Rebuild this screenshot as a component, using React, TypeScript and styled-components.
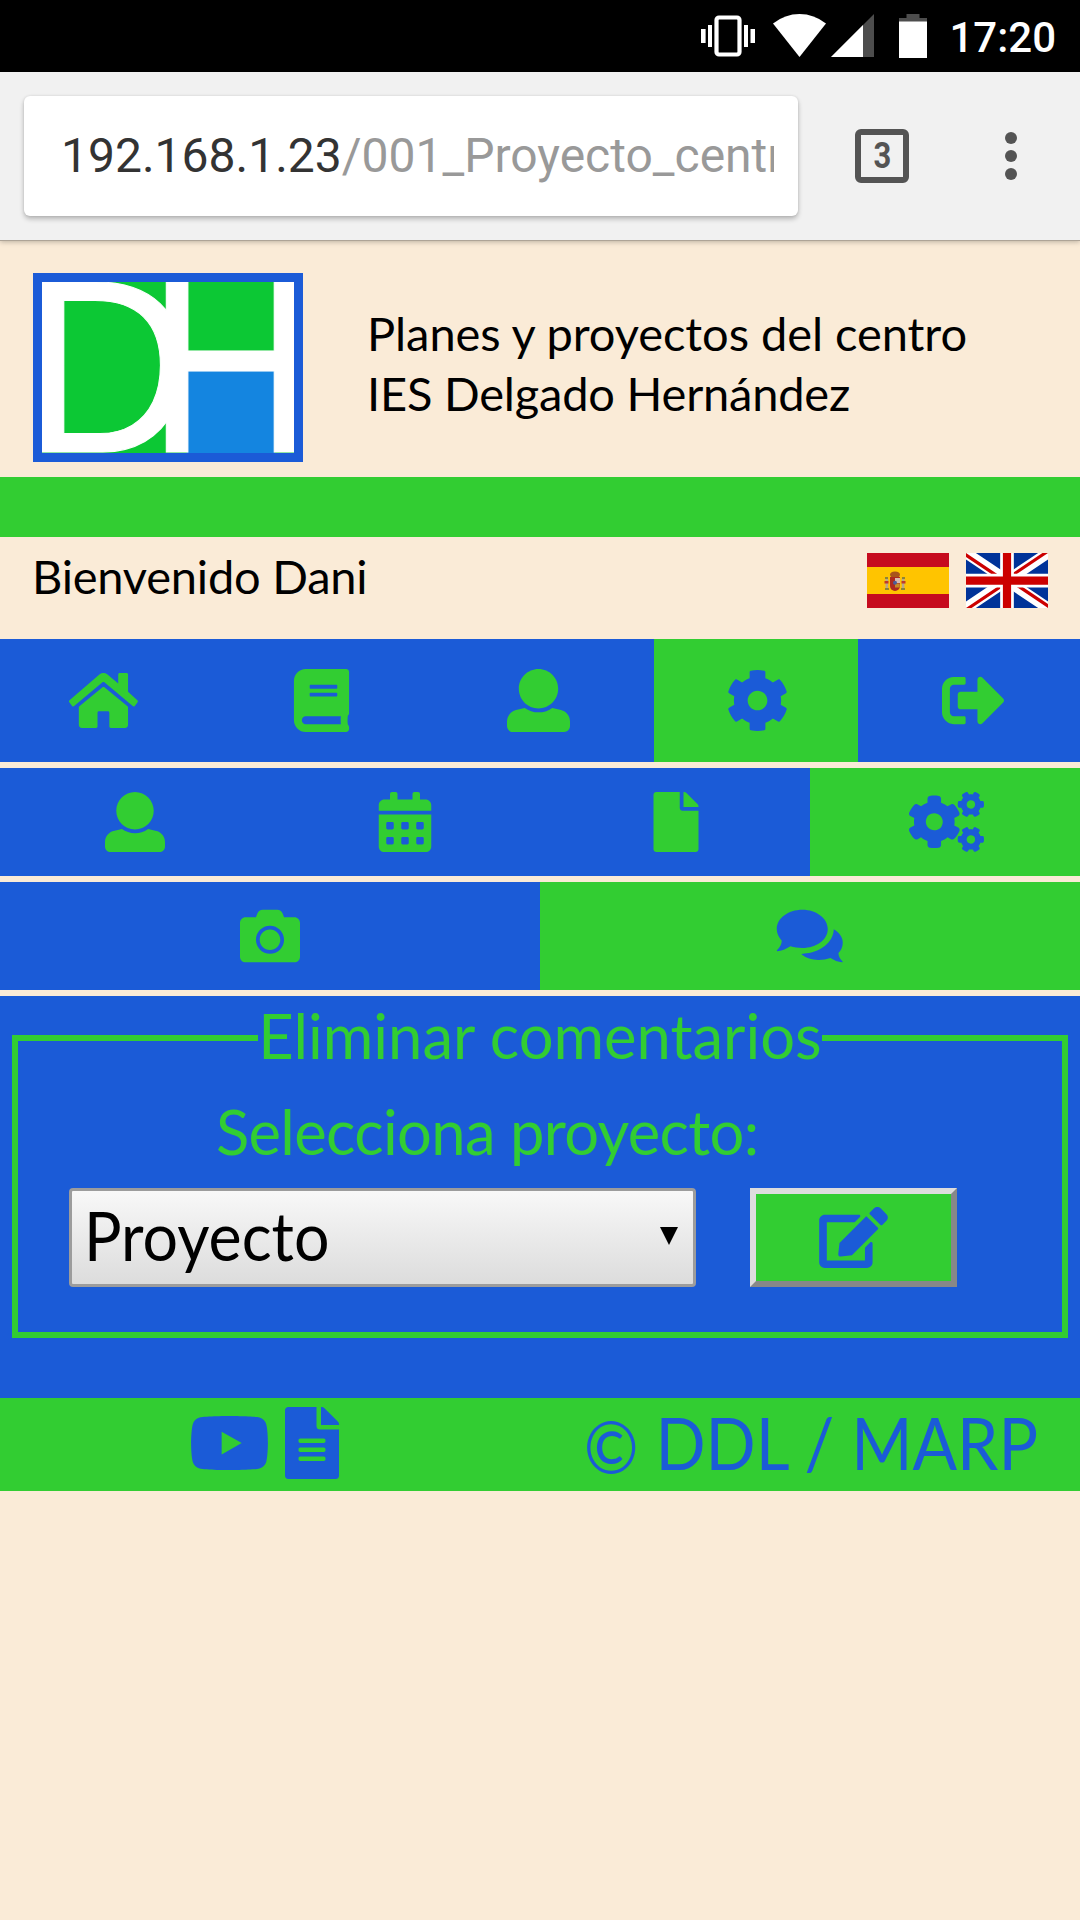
import React from 'react';
import styled, { createGlobalStyle, css } from 'styled-components';
import {
  FaBook,
  FaCalendarAlt,
  FaCamera,
  FaCog,
  FaCogs,
  FaEdit,
  FaFile,
  FaFileAlt,
  FaSignOutAlt,
  FaYoutube,
} from 'react-icons/fa';

const BLUE = '#1b5bd7';
const GREEN = '#32cd32';
const CREAM = '#faebd7';

const GlobalStyle = createGlobalStyle`
  * { box-sizing: border-box; }
  body { margin: 0; background: ${CREAM}; font-family: Lato, "Noto Sans", sans-serif; }
`;

const Screen = styled.div`
  width: 1080px;
  height: 1920px;
  overflow: hidden;
  background: ${CREAM};
`;

/* ---------- Android status bar ---------- */

const StatusBar = styled.div`
  height: 72px;
  padding: 0 24px 0 0;
  display: flex;
  justify-content: flex-end;
  align-items: flex-start;
  background: #000;
`;

const StatusIcon = styled.svg<{ $top: number; $gap: number }>`
  display: block;
  flex: none;
  margin: ${(p) => p.$top}px ${(p) => p.$gap}px 0 0;
`;

const Clock = styled.span`
  font: 500 42px/72px Roboto, sans-serif;
  color: #fff;
  padding-top: 2px;
`;

/* ---------- Browser toolbar ---------- */

const Toolbar = styled.div`
  position: relative;
  height: 169px;
  padding: 24px 63px 0 24px;
  display: flex;
  align-items: flex-start;
  background: #f1f1f1;
  border-bottom: 1px solid #aea497;
  box-shadow: 0 1px 5px rgba(0, 0, 0, 0.25);
`;

const AddressBox = styled.div`
  width: 774px;
  height: 120px;
  padding: 0 24px 0 37px;
  background: #fff;
  border-radius: 6px;
  box-shadow: 0 3px 5px rgba(0, 0, 0, 0.24), 0 0 3px rgba(0, 0, 0, 0.1);
`;

const Address = styled.div`
  overflow: hidden;
  white-space: nowrap;
  font: 400 48px/120px Roboto, sans-serif;
  color: #333;
`;

const AddressPath = styled.span`
  color: #999;
`;

const TabCount = styled.div`
  width: 54px;
  height: 54px;
  margin: 33px 96px 0 57px;
  border: 6px solid #545454;
  border-radius: 6px;
  text-align: center;
  font: 700 36px/43px Roboto, sans-serif;
  color: #545454;
`;

const TabDigit = styled.span`
  display: inline-block;
  transform: scaleX(0.86);
`;

const MenuDots = styled.div`
  display: flex;
  flex-direction: column;
  gap: 6px;
  margin-top: 36px;
`;

const Dot = styled.i`
  width: 12px;
  height: 12px;
  border-radius: 50%;
  background: #545454;
`;

/* ---------- Page header ---------- */

const Header = styled.header`
  height: 236px;
  padding: 32px 33px 0;
  display: flex;
  align-items: flex-start;
`;

const Logo = styled.svg`
  display: block;
  width: 270px;
  height: 189px;
  border: 9px solid ${BLUE};
  background: #0cc834;
`;

const Title = styled.h1`
  margin: 30px 0 0 64px;
  font-size: 47px;
  font-weight: 400;
  line-height: 60px;
  color: #000;
`;

const TitleLine = styled.span<{ $spacing: number }>`
  display: block;
  width: max-content;
  letter-spacing: ${(p) => p.$spacing}px;
`;

const Stripe = styled.div`
  height: 60px;
  background: ${GREEN};
`;

const WelcomeRow = styled.div`
  height: 102px;
  padding: 9px 32.5px 0 32px;
  display: flex;
  align-items: flex-start;
`;

const Welcome = styled.span`
  margin-right: auto;
  font-size: 47px;
  line-height: 60px;
  letter-spacing: -0.22px;
  color: #000;
`;

const Flag = styled.svg`
  display: block;
  width: 82px;
  height: 55px;
  margin: 7px 0 0 17px;
`;

/* ---------- Icon menus ---------- */

const Menu = styled.nav<{ $columns: string; $height: number }>`
  display: grid;
  grid-template-columns: ${(p) => p.$columns};
  height: ${(p) => p.$height}px;
  margin-bottom: 6px;
  background: ${BLUE};
`;

const MenuItem = styled.a<{
  $active?: boolean;
  $size: number;
  $ratio?: number;
  $before?: number;
  $after?: number;
}>`
  display: flex;
  align-items: center;
  justify-content: center;
  padding: 0 ${(p) => p.$after ?? 0}px 0 ${(p) => p.$before ?? 0}px;
  font-size: ${(p) => p.$size}px;
  color: ${GREEN};
  ${(p) =>
    p.$active &&
    css`
      background: ${GREEN};
      color: ${BLUE};
    `}
  svg {
    display: block;
    height: 1em;
    width: ${(p) => p.$ratio ?? 1}em;
  }
`;

/* ---------- Form ---------- */

const Panel = styled.main`
  height: 402px;
  padding: 3px 12px 0;
  background: ${BLUE};
`;

const Group = styled.fieldset`
  height: 339px;
  margin: 0;
  padding: 18px 0 0;
  border: 6px solid ${GREEN};
  color: ${GREEN};
`;

const Legend = styled.legend`
  width: 564px;
  height: 78px;
  margin: 0 auto;
  padding: 0;
  text-align: center;
  white-space: nowrap;
  font-size: 61.5px;
  line-height: 73px;
`;

const Fields = styled.div`
  display: flex;
  align-items: flex-end;
  gap: 54px;
  padding-left: 51px;
`;

const Field = styled.label`
  display: flex;
  flex-direction: column;
  width: 627px;
  gap: 20px;
`;

const FieldName = styled.span`
  padding-left: 147px;
  white-space: nowrap;
  font-size: 61.5px;
  line-height: 73px;
  letter-spacing: -0.65px;
`;

const SelectBox = styled.span`
  display: flex;
  align-items: center;
  justify-content: space-between;
  height: 99px;
  padding: 0 15px 5px 12px;
  border: 3px solid #9c9c9c;
  border-radius: 4px;
  background: linear-gradient(#f8f8f8, #dcdcdc);
  color: #000;
  font-size: 68px;
  line-height: 80px;
`;

const SelectValue = styled.span`
  display: inline-block;
  transform: scaleX(0.922);
  transform-origin: left center;
`;

const Arrow = styled.svg`
  display: block;
  width: 18px;
  height: 18px;
  margin-top: 2px;
`;

const EditButton = styled.button`
  display: flex;
  align-items: center;
  justify-content: center;
  width: 207px;
  height: 99px;
  padding: 0;
  border: 6px solid;
  border-color: #dddddd #888888 #888888 #dddddd;
  background: ${GREEN};
  color: ${BLUE};
  svg {
    display: block;
    width: 69px;
    height: 61px;
  }
`;

/* ---------- Footer ---------- */

const Footer = styled.footer`
  height: 93px;
  padding: 0 42px 0 189px;
  display: flex;
  align-items: center;
  background: ${GREEN};
  color: ${BLUE};
  font-size: 72px;
`;

const FooterIcon = styled.a<{ $ratio: number }>`
  display: flex;
  margin-right: 15px;
  padding-bottom: 3px;
  svg {
    display: block;
    height: 1em;
    width: ${(p) => p.$ratio}em;
  }
`;

const Credits = styled.span`
  margin-left: auto;
  padding-bottom: 5px;
  line-height: 86px;
  white-space: nowrap;
  transform: scaleX(0.916);
  transform-origin: right center;
`;

const CopyrightSign = styled.span`
  line-height: 1;
  vertical-align: -4px;
`;

/* ---------- Drawings ---------- */

const HomeIcon = () => (
  <svg viewBox="0 0 576 512" fill="currentColor">
    <path d="M488 312.7V456c0 13.3-10.7 24-24 24H348c-6.6 0-12-5.4-12-12V356c0-6.6-5.4-12-12-12h-72c-6.6 0-12 5.4-12 12v112c0 6.6-5.4 12-12 12H112c-13.3 0-24-10.7-24-24V312.7c0-3.6 1.6-7 4.4-9.3l188-154.8c4.4-3.6 10.8-3.6 15.3 0l188 154.8c2.7 2.3 4.3 5.7 4.3 9.3zm75.6-58.7L488 185V44.400c0-6.600-5.400-12-12-12h-56c-6.600 0-12 5.400-12 12V117l-89.500-73.700c-17.700-14.600-43.300-14.600-61 0L12.400 254c-5.100 4.200-5.800 11.800-1.600 16.900l22.500 29c4.200 5.100 11.800 5.800 16.900 1.600l230.200-193.900c4.400-3.600 10.800-3.600 15.300 0l230.200 193.900c5.100 4.200 12.700 3.500 16.900-1.600l22.500-29c4.200-5.200 3.400-12.700-1.700-16.900z" />
  </svg>
);

const UserIcon = () => (
  <svg viewBox="0 0 512 512" fill="currentColor">
    <path d="M256 0c88.366 0 160 71.634 160 160s-71.634 160-160 160S96 248.366 96 160 167.634 0 256 0zm183.283 333.821l-71.313-17.828c-74.923 53.89-165.738 41.864-223.94 0l-71.313 17.828C29.981 344.505 0 382.903 0 426.955V464c0 26.51 21.49 48 48 48h416c26.51 0 48-21.49 48-48v-37.045c0-44.052-29.981-82.45-72.717-93.134z" />
  </svg>
);

const CommentsIcon = () => (
  <svg viewBox="20 17 200 180" fill="currentColor">
    <path d="M98 28C140 28 174 54 174 86S140 143 98 143C85 143 73 141 62 138C50 146 35 152 22 153C21 152 21 150 22 149C30 142 36 130 36 121C27 111 21 99 21 86C21 54 55 28 98 28Z" />
    <path d="M192 87C209 97 219 111 219 127C219 139 214 150 206 158C206 166 211 177 218 183C219 184 219 186 217 186C205 185 193 180 182 173C171 177 159 179 146 179C126 179 108 173 95 162C97 160 99 160 100 160C152 158 191 126 192 87Z" />
  </svg>
);

const CenterLogo = () => (
  <Logo viewBox="126 96 756 512" preserveAspectRatio="none">
    <rect x="560" y="350" width="264" height="258" fill="#1485e0" />
    <g fill="#fff" stroke="#fff" strokeWidth="3" fontFamily="'Liberation Sans', Arial, sans-serif">
      <text transform="translate(66 605) scale(0.965 1)" fontSize="741">D</text>
      <text transform="translate(441.4 606) scale(0.911 1)" fontSize="764">H</text>
    </g>
  </Logo>
);

const SpainFlag = () => (
  <Flag viewBox="0 0 82 55">
    <rect width="82" height="55" fill="#c60b1e" />
    <rect y="14" width="82" height="27" fill="#ffc400" />
    <rect x="18.5" y="25" width="2.6" height="11" fill="#b9a98a" />
    <rect x="34.8" y="25" width="2.6" height="11" fill="#b9a98a" />
    <path d="M17.500 28h4v2.500h-4zM34.500 28h4v2.500h-4z" fill="#c0392b" />
    <path d="M18 24h3v2h-3zM35 24h3v2h-3zM18 35h4v2h-4zM34 35h4v2h-4z" fill="#8d8436" />
    <path d="M23 24h10v9a5 5 0 0 1-10 0z" fill="#ad2a1f" />
    <path d="M28 25h5v5h-5z" fill="#d8b9b0" />
    <path d="M28 30.500h4.800v4H28z" fill="#c98a26" />
    <circle cx="28" cy="29.800" r="2" fill="#4a5d9a" />
    <path d="M23 22q0-3.500 5-3.500t5 3.500l-1 2h-8z" fill="#a8541c" />
  </Flag>
);

const BritishFlag = () => (
  <Flag viewBox="0 0 60 40" preserveAspectRatio="none">
    <clipPath id="uk">
      <path d="M0 0h60v40H0z" />
    </clipPath>
    <g clipPath="url(#uk)">
      <rect width="60" height="40" fill="#003399" />
      <path d="M0 0l60 40M60 0L0 40" stroke="#fff" strokeWidth="8" />
      <path
        d="M-1 .8L29 20.800M61 39.200L31 19.200M59.500-1L29.500 19M.5 41L30.500 21"
        stroke="#cc0000"
        strokeWidth="2.3"
      />
      <path d="M30 0v40M0 20h60" stroke="#fff" strokeWidth="10" />
      <path d="M30 0v40M0 20h60" stroke="#cc0000" strokeWidth="6" />
    </g>
  </Flag>
);

const StatusIcons = () => (
  <>
    <StatusIcon $top={15} $gap={18} width="54" height="42" viewBox="0 0 54 42" fill="#fff">
      <rect x="15.500" y="2.500" width="23" height="37" rx="2.500" fill="none" stroke="#fff" strokeWidth="4.200" />
      <rect x="0" y="14" width="4.600" height="14" />
      <rect x="7" y="10" width="4" height="22" />
      <rect x="43" y="10" width="4" height="22" />
      <rect x="49.500" y="14" width="4.500" height="14" />
    </StatusIcon>
    <StatusIcon $top={14} $gap={5} width="53" height="43" viewBox="0 0 53 43" fill="#fff">
      <path d="M26.500 43L0 9.500Q12 0 26.500 0T53 9.500Z" />
    </StatusIcon>
    <StatusIcon $top={14} $gap={25} width="43" height="43" viewBox="0 0 43 43">
      <path d="M43 0v43H0z" fill="#4d4d4d" />
      <path d="M32 11v32H0z" fill="#fff" />
    </StatusIcon>
    <StatusIcon $top={14} $gap={22.4} width="28" height="44" viewBox="0 0 28 44">
      <path d="M7.500 0h13v4H28v5H0V4h7.500z" fill="#4d4d4d" />
      <rect y="7.500" width="28" height="36.500" fill="#fff" />
    </StatusIcon>
  </>
);

export default function App() {
  return (
    <Screen>
      <GlobalStyle />
      <StatusBar>
        <StatusIcons />
        <Clock>17:20</Clock>
      </StatusBar>
      <Toolbar>
        <AddressBox>
          <Address>
            192.168.1.23<AddressPath>/001_Proyecto_centro</AddressPath>
          </Address>
        </AddressBox>
        <TabCount>
          <TabDigit>3</TabDigit>
        </TabCount>
        <MenuDots>
          <Dot />
          <Dot />
          <Dot />
        </MenuDots>
      </Toolbar>

      <Header>
        <CenterLogo />
        <Title>
          <TitleLine $spacing={-0.05}>Planes y proyectos del centro</TitleLine>
          <TitleLine $spacing={-0.2}>IES Delgado Hernández</TitleLine>
        </Title>
      </Header>
      <Stripe />
      <WelcomeRow>
        <Welcome>Bienvenido Dani</Welcome>
        <SpainFlag />
        <BritishFlag />
      </WelcomeRow>

      <Menu $columns="207px 228px 219px 204px 222px" $height={123}>
        <MenuItem $size={63} $ratio={1.125}><HomeIcon /></MenuItem>
        <MenuItem $size={63}><FaBook /></MenuItem>
        <MenuItem $size={63} $after={12}><UserIcon /></MenuItem>
        <MenuItem $size={63} $active $before={3}><FaCog /></MenuItem>
        <MenuItem $size={63} $before={8}><FaSignOutAlt /></MenuItem>
      </Menu>
      <Menu $columns="repeat(4, 1fr)" $height={108}>
        <MenuItem $size={60}><UserIcon /></MenuItem>
        <MenuItem $size={60} $after={1}><FaCalendarAlt /></MenuItem>
        <MenuItem $size={60} $before={2}><FaFile /></MenuItem>
        <MenuItem $size={60} $ratio={1.25} $active $before={3}><FaCogs /></MenuItem>
      </Menu>
      <Menu $columns="repeat(2, 1fr)" $height={108}>
        <MenuItem $size={60}><FaCamera /></MenuItem>
        <MenuItem $size={60} $ratio={1.125} $active><CommentsIcon /></MenuItem>
      </Menu>

      <Panel>
        <Group>
          <Legend>Eliminar comentarios</Legend>
          <Fields>
            <Field>
              <FieldName>Selecciona proyecto:</FieldName>
              <SelectBox>
                <SelectValue>Proyecto</SelectValue>
                <Arrow viewBox="0 0 18 18">
                  <path d="M0 0h18L9 18z" />
                </Arrow>
              </SelectBox>
            </Field>
            <EditButton>
              <FaEdit />
            </EditButton>
          </Fields>
        </Group>
      </Panel>
      <Footer>
        <FooterIcon $ratio={1.125}><FaYoutube /></FooterIcon>
        <FooterIcon $ratio={0.75}><FaFileAlt /></FooterIcon>
        <Credits>
          <CopyrightSign>©</CopyrightSign> DDL / MARP
        </Credits>
      </Footer>
    </Screen>
  );
}
